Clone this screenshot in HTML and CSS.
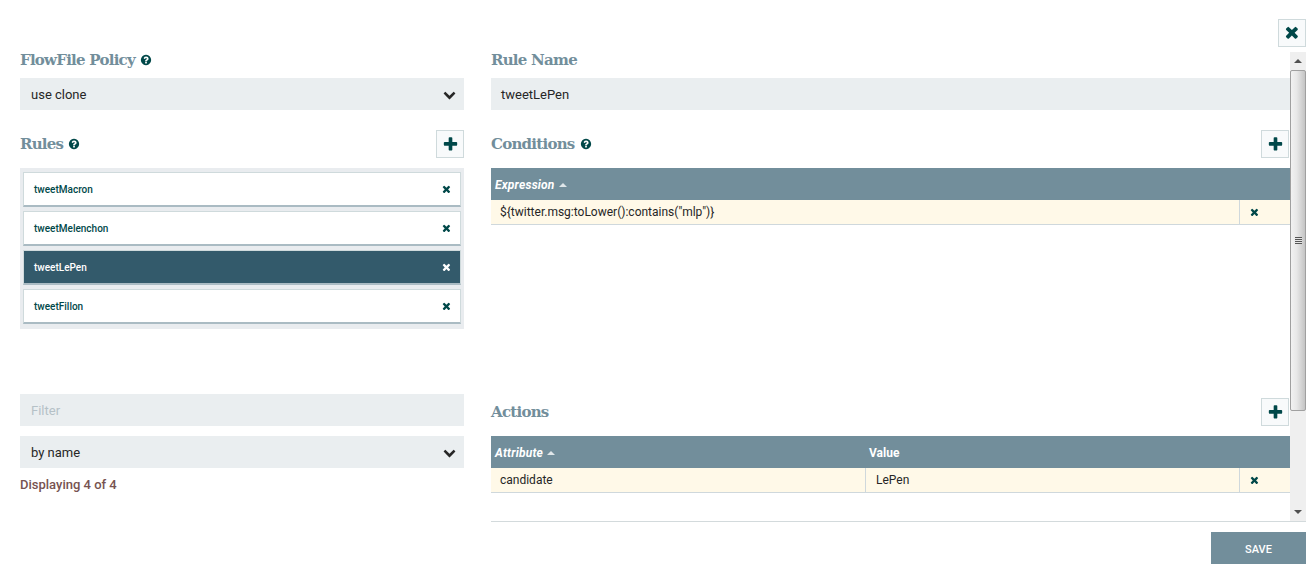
FILE: index.html
```html
<!DOCTYPE html>
<html lang="en">
<head>
  <meta charset="UTF-8">
  <title>Advanced Rules</title>
  <link rel="stylesheet" href="styles.css">
</head>
<body>
  <svg class="icon-defs" aria-hidden="true">
    <symbol id="i-times" viewBox="0 0 1432 1792"><path d="M1298 1242q0 40-28 68l-136 136q-28 28-68 28t-68-28l-294-294-294 294q-28 28-68 28t-68-28l-136-136q-28-28-28-68t28-68l294-294-294-294q-28-28-28-68t28-68l136-136q28-28 68-28t68 28l294 294 294-294q28-28 68-28t68 28l136 136q28 28 28 68t-28 68l-294 294 294 294q28 28 28 68z"/></symbol>
    <symbol id="i-plus" viewBox="0 0 1792 1792"><path d="M1600 736v192q0 40-28 68t-68 28h-416v416q0 40-28 68t-68 28h-192q-40 0-68-28t-28-68v-416h-416q-40 0-68-28t-28-68v-192q0-40 28-68t68-28h416v-416q0-40 28-68t68-28h192q40 0 68 28t28 68v416h416q40 0 68 28t28 68z"/></symbol>
    <symbol id="i-down" viewBox="0 0 1792 1792"><path d="M1683 808l-742 741q-19 19-45 19t-45-19l-742-741q-19-19-19-45.5t19-45.5l166-165q19-19 45-19t45 19l531 531 531-531q19-19 45-19t45 19l166 165q19 19 19 45.5t-19 45.5z"/></symbol>
    <symbol id="i-help" viewBox="0 0 1792 1792"><path d="M1024 1376v-192q0-14-9-23t-23-9h-192q-14 0-23 9t-9 23v192q0 14 9 23t23 9h192q14 0 23-9t9-23zm256-672q0-88-55.5-163t-138.5-116-170-41q-243 0-371 213-15 24 8 42l132 100q7 6 19 6 16 0 25-12 53-68 86-92 34-24 86-24 48 0 85.5 26t37.5 59q0 38-20 61t-68 45q-63 28-115.5 86.5t-52.5 125.5v36q0 14 9 23t23 9h192q14 0 23-9t9-23q0-19 21.5-49.5t54.5-49.5q32-18 49-28.5t46-35 44.5-48 28-60.5 12.5-81zm384 192q0 209-103 385.5t-279.5 279.5-385.5 103-385.5-103-279.5-279.5-103-385.5 103-385.5 279.5-279.5 385.5-103 385.5 103 279.5 279.5 103 385.5z"/></symbol>
  </svg>

  <div class="top-bar">
    <button class="icon-btn"><svg class="icon-lg"><use href="#i-times"/></svg></button>
  </div>

  <div class="content">
    <div class="left-col">
      <div class="heading-row">
        <h2>FlowFile Policy</h2>
        <svg class="help"><use href="#i-help"/></svg>
      </div>
      <div class="field combo">
        <span>use clone</span>
        <svg class="chevron"><use href="#i-down"/></svg>
      </div>

      <div class="heading-row with-btn">
        <h2>Rules</h2>
        <svg class="help"><use href="#i-help"/></svg>
        <button class="icon-btn push"><svg class="icon-md"><use href="#i-plus"/></svg></button>
      </div>
      <ul class="rule-list">
        <li class="rule"><span>tweetMacron</span><svg class="icon-sm"><use href="#i-times"/></svg></li>
        <li class="rule"><span>tweetMelenchon</span><svg class="icon-sm"><use href="#i-times"/></svg></li>
        <li class="rule selected"><span>tweetLePen</span><svg class="icon-sm"><use href="#i-times"/></svg></li>
        <li class="rule"><span>tweetFillon</span><svg class="icon-sm"><use href="#i-times"/></svg></li>
      </ul>

      <div class="field filter">Filter</div>
      <div class="field combo by-name">
        <span>by name</span>
        <svg class="chevron"><use href="#i-down"/></svg>
      </div>
      <div class="displaying">Displaying 4 of 4</div>
    </div>

    <div class="right-wrap">
      <div class="right-col">
        <div class="heading-row">
          <h2>Rule Name</h2>
        </div>
        <div class="field">tweetLePen</div>

        <div class="heading-row with-btn">
          <h2>Conditions</h2>
          <svg class="help"><use href="#i-help"/></svg>
          <button class="icon-btn push inset"><svg class="icon-md"><use href="#i-plus"/></svg></button>
        </div>
        <div class="table-area">
          <div class="table-head">
            <span class="th sortable">Expression <i class="sort-up"></i></span>
          </div>
          <div class="table-row">
            <span class="td grow">${twitter.msg:toLower():contains("mlp")}</span>
            <span class="td del"><svg class="icon-sm"><use href="#i-times"/></svg></span>
          </div>
        </div>

        <div class="heading-row with-btn actions">
          <h2>Actions</h2>
          <button class="icon-btn push inset"><svg class="icon-md"><use href="#i-plus"/></svg></button>
        </div>
        <div class="table-head">
          <span class="th sortable half">Attribute <i class="sort-up"></i></span>
          <span class="th">Value</span>
        </div>
        <div class="table-row">
          <span class="td half">candidate</span>
          <span class="td grow">LePen</span>
          <span class="td del"><svg class="icon-sm"><use href="#i-times"/></svg></span>
        </div>
      </div>

      <div class="scrollbar">
        <div class="arrow"><i class="arrow-up"></i></div>
        <div class="thumb"><i class="grip"></i></div>
        <div class="track"></div>
        <div class="arrow"><i class="arrow-down"></i></div>
      </div>
    </div>
  </div>

  <div class="footer">
    <button class="save">SAVE</button>
  </div>
</body>
</html>
```

FILE: styles.css
```css
* {
  box-sizing: border-box;
}

body {
  margin: 0;
  font-family: 'Roboto', sans-serif;
  font-size: 13px;
  color: #262626;
  background: #fff;
  overflow: hidden;
}

.icon-defs {
  display: none;
}

svg {
  fill: #004849;
}

.top-bar {
  display: flex;
  justify-content: flex-end;
  height: 52px;
  padding: 19px 10px 0 0;
}

.icon-btn {
  display: flex;
  align-items: center;
  justify-content: center;
  width: 28px;
  height: 28px;
  padding: 0;
  background: #f8fafb;
  border: 1px solid #cfdadc;
}

.icon-lg {
  width: 18px;
  height: 18px;
}

.icon-md {
  width: 17px;
  height: 17px;
}

.icon-sm {
  width: 11px;
  height: 11px;
}

.content {
  display: flex;
  height: 470px;
}

.left-col {
  width: 491px;
  padding: 0 27px 0 20px;
}

.left-col .field {
  padding-left: 11px;
}

.right-wrap {
  display: flex;
  width: 815px;
  margin-right: 10px;
  flex: none;
  border-bottom: 1px solid #d3dadc;
}

.right-col {
  width: 799px;
}

.heading-row {
  display: flex;
  align-items: center;
  gap: 5px;
  height: 16px;
  margin-bottom: 10px;
}

.heading-row.with-btn {
  height: 28px;
  margin-top: 20px;
}

.heading-row.actions {
  margin-top: 0;
}

h2 {
  margin: 0;
  font-family: 'DejaVu Serif', serif;
  font-size: 15px;
  font-weight: 700;
  letter-spacing: -0.75px;
  color: #728e9b;
}

.help {
  width: 12px;
  height: 12px;
  margin-top: -1px;
}

.push {
  margin-left: auto;
}

.inset {
  margin-right: 1px;
}

.field {
  display: flex;
  align-items: center;
  height: 32px;
  padding: 0 10px;
  background: #eaeef0;
}

.combo {
  justify-content: space-between;
  padding-right: 8px;
}

.chevron {
  width: 13px;
  height: 13px;
  fill: #262626;
}

.filter {
  margin-top: 65px;
  color: #b5c1c7;
}

.by-name {
  margin-top: 10px;
}

.displaying {
  margin-top: 8px;
  font-size: 13px;
  line-height: 17px;
  font-weight: 500;
  color: #775351;
}

.rule-list {
  margin: 0;
  padding: 4px 3px 5px;
  list-style: none;
  background: #e9ecef;
  display: flex;
  flex-direction: column;
  gap: 4px;
}

.rule {
  display: flex;
  align-items: center;
  justify-content: space-between;
  height: 35px;
  padding: 0 8px 0 10px;
  background: #fff;
  border: 1px solid #cfdadc;
  border-bottom: 2px solid #aabbc3;
  font-size: 10px;
  font-weight: 500;
  color: #004849;
}

.rule.selected {
  background: #335a6b;
  color: #fff;
}

.rule.selected svg {
  fill: #fff;
}

.table-area {
  height: 230px;
}

.table-head {
  display: flex;
  align-items: center;
  height: 32px;
  padding-top: 2px;
  background: #728e9b;
  color: #fff;
  font-size: 12px;
  font-weight: 700;
}

.th {
  padding-left: 4px;
}

.sortable {
  font-style: italic;
  letter-spacing: 0.2px;
}

.half {
  width: 374px;
  flex: none;
}

.sort-up {
  display: inline-block;
  margin-left: 1px;
  vertical-align: 2px;
  border: 4px solid transparent;
  border-top: 0;
  border-bottom-color: #dfe6e9;
}

.table-row {
  display: flex;
  height: 25px;
  background: #fff9e8;
  border-bottom: 1px solid #cfd8dc;
  font-size: 12px;
}

.td {
  display: flex;
  align-items: center;
  padding-left: 9px;
}

.td.half + .td {
  padding-left: 10px;
  border-left: 1px solid #cfd8dc;
}

.grow {
  flex: 1;
}

.del {
  width: 51px;
  flex: none;
  padding-left: 9px;
  border-left: 1px solid #cfd8dc;
}

.scrollbar {
  display: flex;
  flex-direction: column;
  width: 16px;
  background: #efefef;
}

.arrow {
  display: flex;
  align-items: center;
  justify-content: center;
  height: 18px;
  flex: none;
}

.arrow-up,
.arrow-down {
  border: 4px solid transparent;
}

.arrow-up {
  border-top: 0;
  border-bottom-color: #505050;
}

.arrow-down {
  border-bottom: 0;
  border-top-color: #505050;
}

.thumb {
  display: flex;
  align-items: center;
  justify-content: center;
  height: 341px;
  flex: none;
  background: linear-gradient(to right, #f2f2f2, #e8e8e8 40%, #c4c4c4);
  border: 1px solid #a0a0a0;
  border-radius: 2px;
}

.grip {
  width: 7px;
  height: 7px;
  background: repeating-linear-gradient(to bottom, #555 0, #555 1px, #e6e6e6 1px, #e6e6e6 2px);
}

.track {
  flex: 1;
}

.footer {
  display: flex;
  justify-content: flex-end;
  padding: 10px 10px 0 0;
}

.save {
  width: 95px;
  height: 32px;
  padding: 2px 0 0;
  border: 0;
  background: #728e9b;
  color: #fff;
  font-family: 'Roboto', sans-serif;
  font-size: 11px;
  font-weight: 500;
}
```
